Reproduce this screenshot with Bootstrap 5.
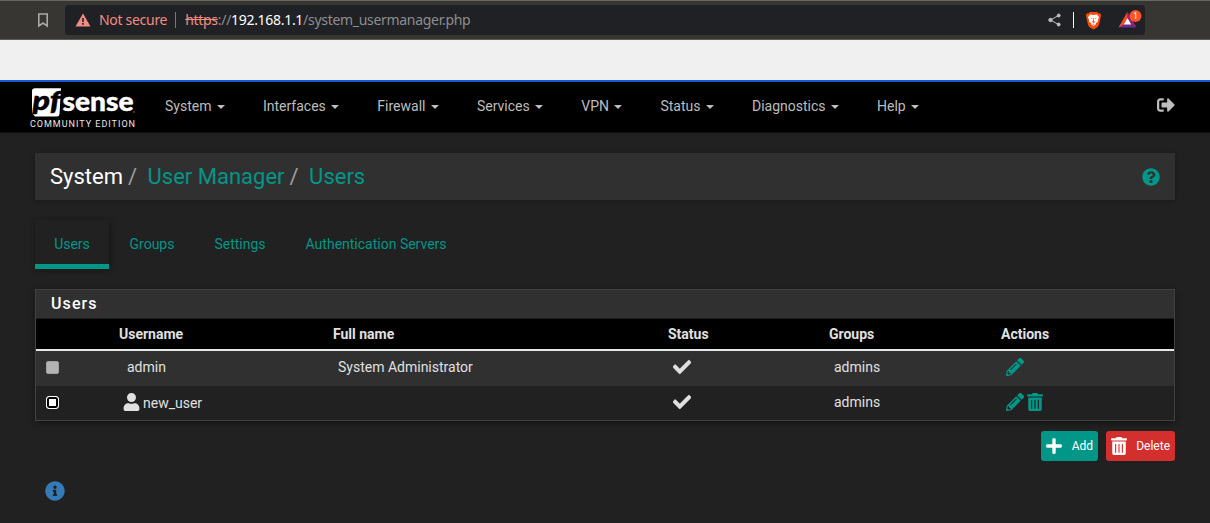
<!DOCTYPE html>
<html lang="en" data-bs-theme="dark">
<head>
<meta charset="utf-8">
<meta name="viewport" content="width=device-width, initial-scale=1">
<title>pfSense - System: User Manager: Users</title>
<link href="https://cdn.jsdelivr.net/npm/bootstrap@5.3.0/dist/css/bootstrap.min.css" rel="stylesheet">
<style>
html, body { height: 523px; overflow: hidden; }
body { background: #212121; color: #e0e0e0; font-family: Roboto, sans-serif; font-size: 14px; line-height: 20px; }
a { text-decoration: none; color: #009688; }
svg { display: block; flex: none; }
.fa { fill: currentColor; }
.browser-bar { height: 40px; background: #383633; border-top: 1px solid #686763; border-bottom: 1px solid #5b5a57; padding-left: 37px; }
.address { width: 1080px; height: 30px; margin-left: 16px; background: #202124; border-radius: 3px; font-family: "Noto Sans", sans-serif; font-size: 14px; letter-spacing: -.3px; color: #8d8e90; padding: 0 3px 0 10px; }
.url { margin-left: 1px; }
.insecure { color: #f28b82; }
.vr-line { width: 1px; height: 16px; background: #77787a; }
.strip { height: 42px; background: #f0f0f0; border-bottom: 2px solid #1558d6; }
.topnav { height: 51px; background: #000; border-bottom: 1px solid #101010; padding: 0 35px 0 28px; }
.brand-logo { margin-right: 18px; }
.topnav .nav-link { padding: 0 19px; height: 48px; line-height: 48px; color: #bdbdbd; }
.topnav .dropdown-toggle::after { margin-left: 5.5px; border-top: 4px solid; border-left: 4px solid transparent; border-right: 4px solid transparent; vertical-align: 2px; }
.page { padding: 20px 35px 0; }
.crumbs { height: 47px; background: #303030; padding: 0 15px; font-size: 22px; box-shadow: 0 1px 4px rgba(0,0,0,.3); }
.crumbs .sep { color: #9e9e9e; margin: 0 10.5px 0 5px; }
.tabs { margin-top: 20px; height: 49px; }
.tabs .nav-link { padding: 0; height: 49px; line-height: 48px; color: #009688; }
.tabs .active { width: 74px; text-align: center; border-bottom: 5px solid #009688; box-shadow: 1px 1px 6px rgba(0,0,0,.45); }
.users-panel { margin-top: 20px; height: 132px; border: 1px solid #424242; box-shadow: 0 2px 7px rgba(0,0,0,.4); }
.users-title { height: 29px; line-height: 27px; background: #303030; border-bottom: 1px solid #1c1c1c; padding-left: 15px; font-size: 16px; font-weight: 500; letter-spacing: 1.1px; color: #fff; }
.users-table { width: 100%; table-layout: fixed; border-collapse: separate; border-spacing: 0; }
.users-table th { height: 32px; padding: 0 4px 1px; background: #000; border-bottom: 2px solid #e4e8e8; font-weight: 700; }
.users-table td { height: 35px; padding: 0 9px 3px; vertical-align: middle; }
.users-table tr:last-child td { height: 34px; padding-bottom: 2px; }
.users-table tbody tr:first-child { background: #303030; }
.users-table td:first-child { padding: 0 10px 2px; }
.users-table .fa { margin-bottom: 1px; }
.box { width: 13px; height: 13px; border-radius: 2px; background: #b3b3b3; border: 1px solid #a0a0a0; }
.box-on { background: #fff; border: 1px solid #fff; border-radius: 3px; box-shadow: inset 0 0 0 2px #000; }
.act { height: 30px; border: 0; border-radius: 3px; color: #fff; font-size: 12px; line-height: 18px; padding: 0 5px; }
.act-add { width: 57px; background: #009688; }
.act-delete { width: 69px; background: #d32f2f; }
</style>
</head>
<body>
<header class="browser-bar d-flex align-items-center">
  <svg width="12" height="16" viewBox="0 0 12 16" fill="none" stroke="#aaa9a7" stroke-width="1.6"><path d="M1.8 2H10.2V14L6 11 1.8 14z"/></svg>
  <div class="address d-flex align-items-center">
    <svg width="16" height="14" viewBox="0 0 16 14"><path d="M8 .5 15.5 13.5H.5z" fill="#f28b82"/><path d="M7.2 5h1.6v4H7.2zm0 5h1.6v1.7H7.2z" fill="#202124"/></svg>
    <span class="insecure ms-2">Not secure</span>
    <span class="vr-line mx-2"></span>
    <span class="url"><span class="insecure text-decoration-line-through">https</span>://<span class="text-white">192.168.1.1</span>/system_usermanager.php</span>
    <div class="d-flex align-items-center ms-auto">
      <svg width="13" height="14" viewBox="0 0 13 14" fill="#bdbdbd" stroke="#bdbdbd"><path d="M10.5 2.5 2.5 7l8 4.5" fill="none"/><circle cx="2.5" cy="7" r="1.7"/><circle cx="10.7" cy="2.5" r="1.5"/><circle cx="10.7" cy="11.5" r="1.5"/></svg>
      <span class="vr-line bg-light" style="margin:0 11px 0 12px"></span>
      <svg width="17" height="19" viewBox="0 0 17 19"><path d="M5 1h7l1.3 1.3 1.4-.1L16.2 4l-.5 2L14 13.8 12.7 16 8.5 18.5 4.3 16 3 13.8 1.3 6 .8 4l1.500-1.800 1.400.1z" fill="#fb4a0a"/><path d="M5 3.600 8.500 4l3.500-.4L14 6.200l-1.200 3 .2 1.400-2 1.400-.4 1.600L8.500 15 6.400 13.600 6 12l-2-1.400.2-1.400L3 6.200z" fill="#fff"/><path d="M5 6.400l2.600.9-.5.700zM12 6.400l-2.600.9.5.7zM8.100 7.500h.8v2.600l1.500.8-1.900.8-1.900-.8 1.500-.8zM7.300 13l1.200-.5 1.200.5-1.200.7z" fill="#fb4a0a"/></svg>
      <svg width="24" height="20" viewBox="0 0 24 20" style="margin-left:16px"><path d="M9.500 2 0.500 17.500H18.500z" fill="#662d91"/><path d="M9.500 2V8L5.800 14.500.5 17.500z" fill="#ff4724"/><path d="M9.500 2V8l3.700 6.500 5.300 3z" fill="#9e1f63"/><path d="M9.500 8 13.200 14.500H5.800z" fill="#fff"/><circle cx="17.500" cy="6" r="6" fill="#fb542b"/><text x="17.500" y="9" font-size="8" letter-spacing="0" text-anchor="middle" fill="#fff" font-family="Noto Sans, sans-serif">1</text></svg>
    </div>
  </div>
</header>
<div class="strip"></div>
<nav class="topnav d-flex align-items-start">
  <a class="brand-logo" href="#" aria-label="pfSense Community Edition">
    <svg width="100" height="49" viewBox="0 0 100 49" overflow="visible">
      <path d="M7 6.300H33L31.500 32Q31.300 34.500 29 34.500H7L4 31V9Q4 6.300 7 6.300z" fill="#fff"/>
      <text x="4.500" y="28" font-family="Lato, sans-serif" font-weight="900" font-style="italic" font-size="26" textLength="28" lengthAdjust="spacingAndGlyphs" fill="#000" stroke="#000" stroke-width=".5">pf</text>
      <text x="34.500" y="28.700" font-family="Lato, sans-serif" font-weight="900" font-size="26" textLength="71" lengthAdjust="spacingAndGlyphs" fill="#fff" stroke="#fff" stroke-width=".4">sense</text>
      <circle cx="106" cy="30" r=".8" fill="#777"/>
      <text x="2" y="45" font-family="Roboto, sans-serif" font-size="9" textLength="105" fill="#e8e8e8">COMMUNITY EDITION</text>
    </svg>
  </a>
  <div class="nav flex-nowrap">
    <a class="nav-link dropdown-toggle" href="#">System</a>
    <a class="nav-link dropdown-toggle" href="#">Interfaces</a>
    <a class="nav-link dropdown-toggle" href="#">Firewall</a>
    <a class="nav-link dropdown-toggle" href="#">Services</a>
    <a class="nav-link dropdown-toggle" href="#">VPN</a>
    <a class="nav-link dropdown-toggle" href="#">Status</a>
    <a class="nav-link dropdown-toggle" href="#">Diagnostics</a>
    <a class="nav-link dropdown-toggle" href="#">Help</a>
  </div>
  <svg class="fa ms-auto" style="color:#bdbdbd;margin-top:14px" width="18" height="18" viewBox="0 0 512 512"><path d="M497 273L329 441c-15 15-41 4.500-41-17v-96H152c-13.300 0-24-10.700-24-24v-96c0-13.300 10.700-24 24-24h136V88c0-21.400 25.900-32 41-17l168 168c9.300 9.400 9.300 24.600 0 34zM192 436v-40c0-6.600-5.400-12-12-12H96c-17.700 0-32-14.300-32-32V160c0-17.700 14.300-32 32-32h84c6.600 0 12-5.400 12-12V76c0-6.600-5.400-12-12-12H96c-53 0-96 43-96 96v192c0 53 43 96 96 96h84c6.600 0 12-5.400 12-12z"/></svg>
</nav>
<svg width="0" height="0" class="position-absolute">
  <symbol id="check" viewBox="0 0 512 512"><path stroke="currentColor" stroke-width="20" d="M173.898 439.404l-166.400-166.400c-9.997-9.997-9.997-26.206 0-36.204l36.203-36.204c9.997-9.998 26.207-9.998 36.204 0L192 312.690 432.095 72.596c9.997-9.997 26.207-9.997 36.204 0l36.203 36.204c9.997 9.997 9.997 26.206 0 36.204l-294.400 294.401c-9.998 9.997-26.207 9.997-36.204-.001z"/></symbol>
  <symbol id="pencil" viewBox="0 0 512 512"><path d="M497.900 142.100l-46.100 46.100c-4.700 4.700-12.300 4.700-17 0l-111-111c-4.700-4.700-4.700-12.300 0-17l46.100-46.100c18.700-18.700 49.100-18.700 67.900 0l60.100 60.100c18.800 18.700 18.800 49.100 0 67.900zM284.200 99.800L21.600 362.400.4 483.900c-2.900 16.400 11.400 30.600 27.800 27.800l121.500-21.300 262.600-262.600c4.700-4.700 4.700-12.300 0-17l-111-111c-4.800-4.700-12.400-4.700-17.100 0zM124.100 339.900c-5.500-5.500-5.500-14.300 0-19.800l154-154c5.500-5.500 14.300-5.500 19.800 0s5.500 14.300 0 19.800l-154 154c-5.500 5.500-14.300 5.500-19.800 0zM88 424h48v36.300l-64.500 11.300-31.100-31.100L51.700 376H88v48z"/></symbol>
  <symbol id="trash" viewBox="0 0 448 512"><path d="M32 464a48 48 0 0 0 48 48h288a48 48 0 0 0 48-48V128H32zm272-256a16 16 0 0 1 32 0v224a16 16 0 0 1-32 0zm-96 0a16 16 0 0 1 32 0v224a16 16 0 0 1-32 0zm-96 0a16 16 0 0 1 32 0v224a16 16 0 0 1-32 0zM432 32H312l-9.400-18.700A24 24 0 0 0 281.100 0H166.800a23.720 23.720 0 0 0-21.400 13.300L136 32H16A16 16 0 0 0 0 48v32a16 16 0 0 0 16 16h416a16 16 0 0 0 16-16V48a16 16 0 0 0-16-16z"/></symbol>
</svg>
<main class="page">
  <div class="crumbs d-flex align-items-center">
    <span class="text-white">System</span><span class="sep">/</span><a href="#">User Manager</a><span class="sep">/</span><a href="#">Users</a>
    <svg class="fa ms-auto" style="color:#009688" width="18" height="18" viewBox="0 0 512 512"><path d="M504 256c0 136.997-111.043 248-248 248S8 392.997 8 256C8 119.083 119.043 8 256 8s248 111.083 248 248zM262.655 90c-54.497 0-89.255 22.957-116.549 63.758-3.536 5.286-2.353 12.415 2.715 16.258l34.699 26.310c5.205 3.947 12.621 3.008 16.665-2.122 17.864-22.658 30.113-35.797 57.303-35.797 20.429 0 45.698 13.148 45.698 32.958 0 14.976-12.363 22.667-32.534 33.976C247.128 238.528 216 254.941 216 296v4c0 6.627 5.373 12 12 12h56c6.627 0 12-5.373 12-12v-1.333c0-28.462 83.186-29.647 83.186-106.667 0-58.002-60.165-102-116.531-102zM256 338c-25.365 0-46 20.635-46 46 0 25.364 20.635 46 46 46s46-20.636 46-46c0-25.365-20.635-46-46-46z"/></svg>
  </div>
  <div class="tabs nav flex-nowrap">
    <a class="nav-link active" href="#">Users</a>
    <a class="nav-link" style="margin-left:20.500px" href="#">Groups</a>
    <a class="nav-link" style="margin-left:40px" href="#">Settings</a>
    <a class="nav-link" style="margin-left:40px" href="#">Authentication Servers</a>
  </div>
  <section class="users-panel">
    <div class="users-title">Users</div>
    <table class="users-table">
      <colgroup><col style="width:79px"><col style="width:214px"><col style="width:335px"><col style="width:161px"><col style="width:172px"><col></colgroup>
      <thead><tr><th></th><th>Username</th><th>Full name</th><th>Status</th><th>Groups</th><th>Actions</th></tr></thead>
      <tbody>
        <tr><td><div class="box"></div></td><td style="padding-left:12px">admin</td><td>System Administrator</td><td><svg class="fa" width="18" height="18"><use href="#check"/></svg></td><td>admins</td><td><a href="#"><svg class="fa" width="18" height="18"><use href="#pencil"/></svg></a></td></tr>
        <tr><td><div class="box box-on"></div></td><td style="padding-left:8px"><div class="d-flex align-items-center"><svg class="fa" width="17" height="18" viewBox="0 0 448 512"><path d="M224 256c70.700 0 128-57.300 128-128S294.700 0 224 0 96 57.300 96 128s57.300 128 128 128zm89.600 32h-16.700c-22.200 10.200-46.900 16-72.900 16s-50.600-5.800-72.900-16h-16.700C60.200 288 0 348.200 0 422.400V464c0 26.500 21.500 48 48 48h352c26.500 0 48-21.500 48-48v-41.600c0-74.200-60.200-134.400-134.400-134.400z"/></svg><span style="margin:2px 0 0 3px">new_user</span></div></td><td></td><td><svg class="fa" width="18" height="18"><use href="#check"/></svg></td><td>admins</td><td><div class="d-flex"><a href="#"><svg class="fa" width="18" height="18"><use href="#pencil"/></svg></a><a href="#" style="margin-left:3px"><svg class="fa" width="16" height="18"><use href="#trash"/></svg></a></div></td></tr>
      </tbody>
    </table>
  </section>
  <div class="d-flex justify-content-end gap-2" style="margin-top:10px">
    <button class="act act-add d-flex align-items-center justify-content-between"><svg class="fa" width="16" height="18" viewBox="0 0 448 512"><path d="M416 208H272V64c0-17.670-14.330-32-32-32h-32c-17.670 0-32 14.330-32 32v144H32c-17.670 0-32 14.330-32 32v32c0 17.670 14.330 32 32 32h144v144c0 17.670 14.330 32 32 32h32c17.670 0 32-14.330 32-32V304h144c17.670 0 32-14.330 32-32v-32c0-17.670-14.330-32-32-32z"/></svg>Add</button>
    <button class="act act-delete d-flex align-items-center justify-content-between"><svg class="fa" width="16" height="18"><use href="#trash"/></svg>Delete</button>
  </div>
  <svg class="fa" style="color:#337ab7;margin:19.500px 0 0 10px" width="20" height="20" viewBox="0 0 512 512"><path d="M256 8C119.043 8 8 119.083 8 256c0 136.997 111.043 248 248 248s248-111.003 248-248C504 119.083 392.957 8 256 8zm0 110c23.196 0 42 18.804 42 42s-18.804 42-42 42-42-18.804-42-42 18.804-42 42-42zm56 254c0 6.627-5.373 12-12 12h-88c-6.627 0-12-5.373-12-12v-24c0-6.627 5.373-12 12-12h12v-64h-12c-6.627 0-12-5.373-12-12v-24c0-6.627 5.373-12 12-12h64c6.627 0 12 5.373 12 12v100h12c6.627 0 12 5.373 12 12v24z"/></svg>
</main>
<script src="https://cdn.jsdelivr.net/npm/bootstrap@5.3.0/dist/js/bootstrap.bundle.min.js"></script>
</body>
</html>
